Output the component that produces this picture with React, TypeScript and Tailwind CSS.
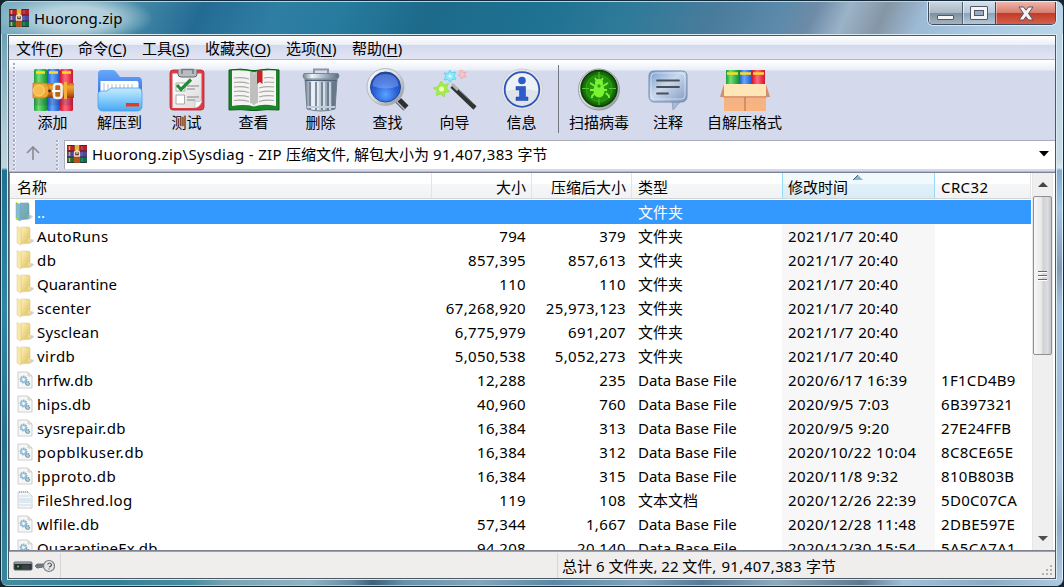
import React from "react";

type Row = [string, string, string, string, string, string, string, string];

const rows: Row[] = [
  ["folder", "AutoRuns", "tracking-[0.4px]", "794", "379", "文件夹", "2021/1/7 20:40", ""],
  ["folder", "db", "tracking-[0.5px]", "857,395", "857,613", "文件夹", "2021/1/7 20:40", ""],
  ["folder", "Quarantine", "tracking-normal", "110", "110", "文件夹", "2021/1/7 20:40", ""],
  ["folder", "scenter", "tracking-[0.3px]", "67,268,920", "25,973,123", "文件夹", "2021/1/7 20:40", ""],
  ["folder", "Sysclean", "tracking-[0.25px]", "6,775,979", "691,207", "文件夹", "2021/1/7 20:40", ""],
  ["folder", "virdb", "tracking-[0.5px]", "5,050,538", "5,052,273", "文件夹", "2021/1/7 20:40", ""],
  ["db", "hrfw.db", "tracking-[0.3px]", "12,288", "235", "Data Base File", "2020/6/17 16:39", "1F1CD4B9"],
  ["db", "hips.db", "tracking-[0.3px]", "40,960", "760", "Data Base File", "2020/9/5 7:03", "6B397321"],
  ["db", "sysrepair.db", "tracking-[0.4px]", "16,384", "313", "Data Base File", "2020/9/5 9:20", "27E24FFB"],
  ["db", "popblkuser.db", "tracking-[0.55px]", "16,384", "312", "Data Base File", "2020/10/22 10:04", "8C8CE65E"],
  ["db", "ipproto.db", "tracking-[0.5px]", "16,384", "315", "Data Base File", "2020/11/8 9:32", "810B803B"],
  ["log", "FileShred.log", "tracking-[0.32px]", "119", "108", "文本文档", "2020/12/26 22:39", "5D0C07CA"],
  ["db", "wlfile.db", "tracking-[0.3px]", "57,344", "1,667", "Data Base File", "2020/12/28 11:48", "2DBE597E"],
  ["db", "QuarantineEx.db", "tracking-[0.12px]", "94,208", "20,140", "Data Base File", "2020/12/30 15:54", "5A5CA7A1"],
];

function Defs() {
  return (
    <svg className="absolute h-0 w-0" aria-hidden="true">
      <defs>
        <linearGradient id="green" x1="0" x2="1"><stop offset="0" stopColor="#1c9c3c" /><stop offset=".35" stopColor="#6fdf72" /><stop offset="1" stopColor="#159334" /></linearGradient>
        <linearGradient id="blue" x1="0" x2="1"><stop offset="0" stopColor="#1d56c8" /><stop offset=".4" stopColor="#66a6fb" /><stop offset="1" stopColor="#1c55cc" /></linearGradient>
        <linearGradient id="red" x1="0" x2="1"><stop offset="0" stopColor="#d3142f" /><stop offset=".4" stopColor="#ff6a80" /><stop offset="1" stopColor="#cd1430" /></linearGradient>
        <linearGradient id="belt" x1="0" x2="0" y1="0" y2="1"><stop offset="0" stopColor="#c66a12" /><stop offset=".25" stopColor="#f3a62f" /><stop offset=".6" stopColor="#d87a1b" /><stop offset="1" stopColor="#8c3f08" /></linearGradient>
        <linearGradient id="steel" x1="0" x2="1"><stop offset="0" stopColor="#71808f" /><stop offset=".25" stopColor="#eef3f7" /><stop offset=".6" stopColor="#a6b4c3" /><stop offset="1" stopColor="#5d6d80" /></linearGradient>
        <linearGradient id="sky" x1="0" x2="0" y1="0" y2="1"><stop offset="0" stopColor="#c9ebff" /><stop offset=".5" stopColor="#84cdfb" /><stop offset="1" stopColor="#49a6f1" /></linearGradient>
        <linearGradient id="deep" x1="0" x2="0" y1="0" y2="1"><stop offset="0" stopColor="#67a9fa" /><stop offset="1" stopColor="#2a5fe0" /></linearGradient>
        <radialGradient id="lens" cx=".5" cy=".75" r=".75"><stop offset="0" stopColor="#5aa2ff" /><stop offset=".5" stopColor="#2b62d8" /><stop offset="1" stopColor="#173fae" /></radialGradient>
        <linearGradient id="silver" x1="0" x2="1" y1="0" y2="1"><stop offset="0" stopColor="#ffffff" /><stop offset=".5" stopColor="#d6dade" /><stop offset="1" stopColor="#858d96" /></linearGradient>
        <linearGradient id="paper" x1="0" x2="1" y1="0" y2="1"><stop offset="0" stopColor="#ffffff" /><stop offset="1" stopColor="#d9d9d9" /></linearGradient>
        <radialGradient id="scan"><stop offset="0" stopColor="#37a81e" /><stop offset=".7" stopColor="#1f8a0b" /><stop offset="1" stopColor="#0c5302" /></radialGradient>
        <linearGradient id="bubble" x1="0" x2="1" y1="0" y2="1"><stop offset="0" stopColor="#7a9ccf" /><stop offset=".45" stopColor="#c9d8ec" /><stop offset="1" stopColor="#8099c0" /></linearGradient>
        <linearGradient id="box" x1="0" x2="0" y1="0" y2="1"><stop offset="0" stopColor="#e9b189" /><stop offset="1" stopColor="#fbb47f" /></linearGradient>
        <linearGradient id="yel" x1="0" x2="1" y1="0" y2="1"><stop offset="0" stopColor="#fff3b8" /><stop offset=".5" stopColor="#ecd787" /><stop offset="1" stopColor="#dfbe55" /></linearGradient>
        <linearGradient id="teal" x1="0" x2="1" y1="0" y2="1"><stop offset="0" stopColor="#82b4d3" /><stop offset="1" stopColor="#6ba39f" /></linearGradient>
      </defs>
    </svg>
  );
}

function AddIcon() {
  return (
    <svg width="46" height="46" viewBox="0 0 46 46">
      <rect x="4" y="2" width="13" height="42" rx="1.5" fill="url(#green)" />
      <rect x="17" y="2" width="13" height="42" rx="1.5" fill="url(#blue)" />
      <rect x="30" y="2" width="13" height="42" rx="1.5" fill="url(#red)" />
      <path d="M6 5.500h9M19 5.500h9M32 5.500h9" stroke="#ffdb29" strokeWidth="2.400" />
      <path d="M4 35h39" stroke="#17305c" strokeOpacity=".16" strokeWidth="7" />
      <path d="M3 16h41v15H3z" fill="url(#belt)" />
      <path d="M3 16h11q5 1 5 7.500T14 31H3z" fill="#eda534" stroke="#c8781a" strokeWidth=".8" />
      <circle cx="9" cy="23.500" r="5.500" fill="#f6bd4c" stroke="#ffdd86" strokeWidth=".8" />
      <circle cx="19.500" cy="24" r="1.400" fill="#4e2407" />
      <rect x="24" y="17" width="7.500" height="14" rx="2.500" fill="#b96618" stroke="#eeeef0" strokeWidth="2.600" />
      <path d="M22 24h8" stroke="#fff" strokeWidth="2" />
      <path d="M35.500 15v17" stroke="#f5ae3a" strokeWidth="3" />
    </svg>
  );
}

function ExtractIcon() {
  return (
    <svg width="46" height="46" viewBox="0 0 46 46">
      <path d="M1 7q0-4 4-4h11q2 0 4 3l3 4h18q4 0 4 5v20H1z" fill="url(#deep)" />
      <path d="M3.500 14h36q2 0 2 2v10h-38z" fill="#fff" />
      <path d="M7 16v9M11 17v8M15 17v8M19 17v8M23 17v8M27 17v8M31 17v8M35 17v8" stroke="#b8bec8" strokeWidth="1" />
      <path d="M1 27q0-3 4-3h5l4-3h27q4 0 4 5v13q0 5-5 5H6q-5 0-5-5z" fill="url(#sky)" stroke="#4b9ff0" strokeWidth=".8" />
      <rect x="29" y="36" width="13" height="3.500" fill="#e33c22" />
    </svg>
  );
}

function TestIcon() {
  return (
    <svg width="46" height="46" viewBox="0 0 46 46">
      <rect x="6" y="3" width="34" height="40" rx="3" fill="#e23b42" stroke="#b8222e" strokeWidth=".8" />
      <path d="M8.500 6.500h29V35q-1 5-7 6h-22z" fill="url(#paper)" />
      <path d="M30 41q2-2 1-7 4 2 7-1-1 7-8 8z" fill="#fff" stroke="#aaa" strokeWidth=".5" />
      <path d="M14 3v4q0 3 3 3h13q3 0 3-3V3" fill="#b9bdc2" stroke="#636569" />
      <path d="M18 7V2.500h11V7" fill="none" stroke="#777" strokeWidth="1.500" />
      <path d="M12 16h9v8h-9zM12 28h8.500v9H12z" fill="#fff" stroke="#aaa" />
      <path d="m13 18 4 4.500L27 12.500" fill="none" stroke="#238a3a" strokeWidth="3.200" />
      <path d="M23 19h12M23 22h8M23 30h12M23 33h8" stroke="#a7a7a7" strokeWidth="1.300" />
    </svg>
  );
}

function ViewIcon() {
  return (
    <svg width="52" height="46" viewBox="0 0 52 46">
      <path d="M1 3q12-2 23 .5h4Q39 1 51 3v40q-12-1-23 .5h-4Q13 42 1 43z" fill="#1c8528" stroke="#0c5c18" />
      <path d="M4 3.500q14-1 22 2v34Q17 37 4 39zM48 3.500q-14-1-22 2v34q9-3 22-.5z" fill="#f4f4f2" />
      <path d="M22 4q4 1 4 4v31q-1-3-4-3zM30 4q-4 1-4 4v31q1-3 4-3z" fill="#8a8a8a" fillOpacity=".5" />
      <path d="M6 11q8-1 15 1M6 15.500q8-1 15 1M6 20q8-1 15 1M6 24.500q8-1 15 1M6 29q8-1 15 1M6 33.500q8-1 15 1M46 11q-6-1-10 0M46 15.500q-6-1-10 0M46 20q-8-1-15 1M46 24.500q-8-1-15 1M46 29q-8-1-15 1M46 33.500q-8-1-15 1" fill="none" stroke="#aaa9a8" strokeWidth="1.100" />
      <path d="M29 3.500h5.500V17l-2.700-2L29 17z" fill="#c92325" />
    </svg>
  );
}

function DeleteIcon() {
  return (
    <svg width="46" height="46" viewBox="0 0 46 46">
      <path d="M16 6V2.500h14V6" fill="none" stroke="#8796a5" strokeWidth="2" />
      <path d="M7 12h32l-2 30q-14 4-28 0z" fill="url(#steel)" stroke="#6d7e91" />
      <path d="M12 15v27M18 15v28M24 15v28M30 15v28M35 15v27" stroke="#607389" strokeWidth="1.500" />
      <path d="M14 15v27M20 15v28M26 15v28M32 15v28" stroke="#edf3f8" strokeWidth="1.300" />
      <path d="M6 6.500h34l1 2q0 3.500-3 3.500H8q-3 0-3-3.500z" fill="url(#steel)" stroke="#778799" />
      <path d="M7 13.500h32" stroke="#4f6175" strokeWidth="1.200" />
      <path d="M9 40h28" stroke="#c2ceda" strokeWidth="2" />
    </svg>
  );
}

function FindIcon() {
  return (
    <svg width="46" height="46" viewBox="0 0 46 46">
      <path d="m32 32 9 9" stroke="#2c2f33" strokeWidth="7" />
      <path d="m31 34 9 9" stroke="#babdc0" strokeWidth="1.600" />
      <path d="m30 29 4 4" stroke="#d5d8dc" strokeWidth="6" />
      <circle cx="20.500" cy="20" r="18.500" fill="url(#silver)" stroke="#a5adb6" strokeWidth=".8" />
      <circle cx="20.500" cy="20" r="15" fill="url(#lens)" stroke="#234792" />
      <path d="M7.500 19q1-12 13-12t13 12q-13 5-26 0z" fill="#a6c6ff" fillOpacity=".36" />
    </svg>
  );
}

function WizardIcon() {
  return (
    <svg width="46" height="46" viewBox="0 0 46 46">
      <path d="m20 19 23 22" stroke="#303233" strokeWidth="4.500" />
      <path d="m20 17 6 6" stroke="#b1b4b6" strokeWidth="3" />
      <path d="m26 22 16 15" stroke="#888b8e" strokeWidth="1" />
      <path d="m9.500 14 2 4 5-1.500-2 4.500 3 3.500-4.500 1-1 4.500-3.500-3-4 1.500.5-5L1 21l4.500-1z" fill="#a6ea4c" stroke="#8ee43b" strokeWidth=".8" />
      <circle cx="9.500" cy="22" r="2.500" fill="#fbffc4" />
      <path d="m18 3 1.500 3 4-1-1.500 4 2 3-4 .5-2 3-2-3-4 .5L14 9l-2-3 4 .5z" fill="#8ceafa" stroke="#4fd0ee" strokeWidth=".8" />
      <circle cx="18" cy="9" r="1.600" fill="#e8fdff" />
      <path d="m30 3 1.200 2.500 3-.5-1.700 2.500L34 10l-3-.3-1.500 2.300-1-2.800-2.500-.7 2-2-.5-2.500z" fill="#f6c6cc" stroke="#f0a0a6" strokeWidth=".8" />
    </svg>
  );
}

function InfoIcon() {
  return (
    <svg width="46" height="46" viewBox="0 0 46 46">
      <circle cx="23" cy="22.500" r="20.500" fill="#e1e5e8" stroke="#cdd2d8" />
      <circle cx="23" cy="22.500" r="17.300" fill="#dfe4ea" stroke="#2f55bb" strokeWidth="1.800" />
      <path d="M7 24Q8 7 23 6.500T39 24q-16-4-32 0z" fill="#fff" fillOpacity=".5" />
      <circle cx="23" cy="13.500" r="3.800" fill="#2f5ccb" />
      <path d="M17 19.500h9.500V30H29v3.500H17V30h3.500v-7H17z" fill="#2d5bcd" stroke="#1c3f9b" strokeWidth=".5" />
    </svg>
  );
}

function ScanIcon() {
  return (
    <svg width="46" height="46" viewBox="0 0 46 46">
      <circle cx="23" cy="22.500" r="20.500" fill="url(#silver)" stroke="#878e8d" strokeWidth=".8" />
      <circle cx="23" cy="21.500" r="18" fill="url(#scan)" stroke="#123e0d" strokeWidth="1.500" />
      <path d="M23 5v7M23 32v6M6 21.500h7M33 21.500h7" stroke="#56c833" strokeWidth="1" />
      <circle cx="23" cy="21.500" r="13" fill="none" stroke="#3faa20" strokeWidth=".7" />
      <ellipse cx="23" cy="23.500" rx="5.500" ry="7" fill="#7af332" />
      <circle cx="23" cy="16" r="4" fill="#7af332" />
      <path d="m19 11 2 3m6-3-2 3m-6 5-5-3m18 0-5 3m-8 4h-5m17 0h-6m-6 3-3 3v2m14-5 3 3v2" fill="none" stroke="#7af332" strokeWidth="1.800" />
      <circle cx="23" cy="19" r="1.700" fill="#3f9f22" />
    </svg>
  );
}

function CommentIcon() {
  return (
    <svg width="46" height="46" viewBox="0 0 46 46">
      <path d="M27 34h9l-8 9z" fill="#a9b9d3" stroke="#8d9bb3" strokeWidth=".8" />
      <path d="M9 4h28q5 0 5 5v20q0 6-6 6H10q-6 0-6-6V9q0-5 5-5z" fill="url(#bubble)" stroke="#7089b1" />
      <path d="M10 6h26q4 0 4 4v18q0 4-4 4H10q-4 0-4-4V10q0-4 4-4z" fill="none" stroke="#eef5ff" strokeOpacity=".6" />
      <path d="M12 13.500h22M12 20h22M12 26.500h11" stroke="#4b4f58" strokeWidth="1.800" strokeLinecap="round" />
    </svg>
  );
}

function SfxIcon() {
  return (
    <svg width="52" height="46" viewBox="0 0 52 46">
      <path d="M7 3h13v17H7z" fill="url(#green)" />
      <path d="M20 3h13v17H20z" fill="url(#blue)" />
      <path d="M33 3h13v17H33z" fill="url(#red)" />
      <path d="M8 6.500h11M21 6.500h11M34 6.500h11" stroke="#ffdb29" strokeWidth="2.400" />
      <path d="M5 18h42v26H5z" fill="url(#box)" />
      <path d="M5 17h42l3 12H2z" fill="#ffe6b7" />
      <path d="M2 29h48l-3 2H5z" fill="#c98560" fillOpacity=".5" />
      <path d="M5 17 1 30h4zM47 17l4 13h-4z" fill="#cf8f6b" />
      <path d="M26 30v14" stroke="#b96a43" strokeWidth="1" />
    </svg>
  );
}

function ArchiveLogo() {
  return (
    <svg width="22" height="20" viewBox="0 0 22 20" className="shrink-0">
      <rect x="1" y="1" width="20" height="6" fill="#b3202f" />
      <rect x="1" y="7" width="20" height="6" fill="#4a47a0" />
      <rect x="1" y="13" width="20" height="6" fill="#0a7440" />
      <path d="M1 1.500h20M1 18.500h20M1 7h20M1 13h20" stroke="#3a1830" strokeOpacity=".7" />
      <path d="M3.500 2v4M3.500 8v4M3.500 14v4" stroke="#f0a432" strokeWidth="1.600" />
      <path d="M16 2v4M16 8v4M16 14v4" stroke="#8990b7" strokeOpacity=".6" />
      <path d="M8 1h6v18H8z" fill="#a1521a" />
      <path d="M9 1h4v5l-2 2-2-2z" fill="#eeb040" />
      <path d="M8.500 12V9q0-2 2.500-2t2.500 2v3z" fill="#5e3a22" stroke="#eadfca" strokeWidth="1.400" />
      <path d="M11 5.500V10" stroke="#f6e7c0" strokeWidth="1.300" />
      <path d="M8 14h6v4H8z" fill="#b8501f" />
    </svg>
  );
}

function FileIcon({ kind }: { kind: string }) {
  if (kind === "folder" || kind === "up") {
    const up = kind === "up";
    return (
      <svg width="18" height="22" viewBox="0 0 18 22">
        <path d="M10 18l5-4 3 1q-1 3-6 4z" fill="#c3c5c8" fillOpacity=".8" />
        <path d="M5 2h8l1 1v14l-2 1-7 1z" fill={up ? "url(#teal)" : "url(#yel)"} stroke={up ? "#6a9faa" : "#d9c27c"} strokeWidth=".5" />
        <path d="m1 1.500 4 2V20l-4-2z" fill={up ? "#86bcd0" : "#f7e7a9"} stroke={up ? "#6fa8b6" : "#e0cc8a"} strokeWidth=".5" />
        <path d="M12.500 13l2 1v3l-3 1z" fill={up ? "#83aeb4" : "#f2dc88"} />
        {up && <path d="M1 1h1v1H1zM12 1h1v1h-1zM14 12h1v1h-1zM1 17h1v1H1z" fill="#c8e81a" />}
      </svg>
    );
  }
  return (
    <svg width="18" height="22" viewBox="0 0 18 22">
      <path d="M2 3h10l4 4v12H2z" fill={kind === "log" ? "#f5f8fa" : "#f7f7f7"} stroke="#c4c4c4" strokeWidth=".8" />
      {kind === "log" ? (
        <>
          <path d="M3 7h11M3 13h12M3 16h12" stroke="#cbdae6" />
          <path d="M3 9h12v3H3z" fill="#dce8f0" />
          <path d="M3 3h9" stroke="#a5a5a5" strokeWidth="1.500" strokeDasharray="1 1" />
        </>
      ) : (
        <>
          <path d="M12 3v4h4" fill="#e2e2e2" stroke="#c4c4c4" strokeWidth=".7" />
          <circle cx="7.500" cy="10.500" r="3" fill="#d8ebf5" stroke="#84aeca" strokeWidth="1.800" strokeDasharray="1.600 .6" />
          <circle cx="7.500" cy="10.500" r="2" fill="#e8f5fb" stroke="#8fb6cc" strokeWidth=".8" />
          <circle cx="11.500" cy="14.500" r="1.900" fill="#b8d2e1" stroke="#6f92ab" strokeWidth="1.300" strokeDasharray="1.200 .5" />
        </>
      )}
    </svg>
  );
}

function Grip({ className }: { className: string }) {
  return (
    <div className={"w-[3px] shrink-0 bg-[radial-gradient(circle_at_1px_1px,#a4a9bb_0px,#a9aec0_0.8px,#ffffff_1.4px,transparent_2px)] bg-[length:3px_4px] " + className} />
  );
}

function Tool({ icon, label, className }: { icon: React.ReactNode; label: string; className: string }) {
  return (
    <div className={"flex shrink-0 flex-col items-center " + className}>
      <div className="flex h-[46px] items-center">{icon}</div>
      <div className="mt-[-1px] h-5 leading-5 whitespace-nowrap">{label}</div>
    </div>
  );
}

const menus: [string, string, string][] = [
  ["文件", "F", "w-[62px]"],
  ["命令", "C", "w-16"],
  ["工具", "S", "w-[63px]"],
  ["收藏夹", "O", "w-[81px]"],
  ["选项", "N", "w-[66px]"],
  ["帮助", "H", "w-20"],
];

export default function App() {
  return (
    <div className="h-[587px] w-[1064px] overflow-hidden bg-[#17222c] font-['Noto_Sans','Noto_Sans_CJK_SC',sans-serif] text-[15px] leading-5 text-black">
      <Defs />
      <div className="flex h-full flex-col overflow-hidden rounded-[8px] border border-[#142b39] bg-[#7fa4bc]">
        <div className="flex h-[33px] shrink-0 items-start rounded-t-[7px] border-t border-[#b6d3df] bg-[linear-gradient(115deg,#7fb0c3_0%,#6ba3b9_8%,#3d83a3_14%,#246b94_19%,#2f7ea3_26%,#277b9d_32%,#1d6a8b_40%,#1f7292_51%,#2f7a99_59%,#4a7c9c_67%,#5c8aaa_73%,#6d8ba7_76%,#9bb3c8_79%,#8496a6_82.500%,#9db9d3_86%,#a6c7e2_91%,#bcd6e9_100%)]">
          <div className="flex h-8 w-[150px] items-center bg-[radial-gradient(ellipse_52%_75%_at_50%_50%,rgba(200,222,230,0.8)_45%,rgba(200,222,230,0)_100%)] pl-[7px]">
            <ArchiveLogo />
            <span className="ml-1 tracking-[0.15px]">Huorong.zip</span>
          </div>
          <div className="mr-[7px] ml-auto flex h-[23px] overflow-hidden rounded-b-[5px] border border-t-0 border-[#424c59] shadow-[0_0_0_1px_rgba(240,248,255,0.7)]">
            <div className="flex w-[34px] justify-center border-r border-[#53606e] bg-[linear-gradient(180deg,#cad6e0_0%,#a9b8c5_48%,#7e8e9d_50%,#a3b3c2_100%)] pt-[13px] shadow-[inset_1px_0_0_rgba(255,255,255,0.5)]">
              <div className="h-[5px] w-[17px] rounded-[1px] border border-[#535666] bg-[#f5f5f5]" />
            </div>
            <div className="flex w-[33px] justify-center border-r border-[#7c3327] bg-[linear-gradient(180deg,#d3dfeb_0%,#b6c8d9_48%,#8ca0b3_50%,#b3c8da_100%)] pt-1 shadow-[inset_1px_0_0_rgba(255,255,255,0.5)]">
              <div className="flex h-[14px] w-[18px] items-center justify-center rounded-[1px] border border-[#535666] bg-[#f5f5f5]">
                <div className="h-[6px] w-[10px] border border-[#535666] bg-[#98adc3]" />
              </div>
            </div>
            <div className="flex w-[59px] justify-center bg-[linear-gradient(180deg,#ecb5aa_0%,#d97d6e_48%,#c03a24_50%,#d6604a_100%)] pt-[4px] shadow-[inset_1px_0_0_rgba(255,255,255,0.4)]">
              <svg width="16" height="15" viewBox="0 0 16 15">
                <path d="M1 1h4.500L8 4.300 10.500 1H15l-4.500 6.500L15 14h-4.500L8 10.700 5.500 14H1l4.500-6.500z" fill="#f4f4f4" stroke="#535666" />
              </svg>
            </div>
          </div>
        </div>

        <div className="flex h-[546px] shrink-0">
          <div className="w-[6px] shrink-0 border-l border-[#b9d8e2] bg-[linear-gradient(180deg,#6ca2b5_0%,#b0cbd5_18%,#bfd5dc_24.500%,#1f7293_25%,#2d87a5_50%,#26718f_75%,#35869c_100%)]" />
          <div className="flex w-[1050px] shrink-0 flex-col border border-[#dcebf2]">
            <div className="flex h-[544px] flex-col border border-[#4b5763] bg-[#d4daec]">
              <nav className="flex h-[24px] shrink-0 items-center border-b border-[#b3b8c8] bg-[linear-gradient(180deg,#ffffff_0%,#e9eef7_39%,#d3d9ed_40%,#e1e5f5_100%)] pl-[7px]">
                {menus.map(([t, k, w]) => (
                  <div key={k} className={"shrink-0 whitespace-nowrap " + w}>
                    {t}(<span className="underline underline-offset-2">{k}</span>)
                  </div>
                ))}
              </nav>

              <div className="flex h-[80px] shrink-0 border-t border-white bg-[linear-gradient(180deg,#ffffff_0px,#e8eef7_9px,#d4daec_10px)]">
                <Grip className="mt-[2px] ml-[4px] h-[78px]" />
                <div className="ml-[3px] flex pt-[6px]">
                  <Tool icon={<AddIcon />} label="添加" className="w-[67px]" />
                  <Tool icon={<ExtractIcon />} label="解压到" className="w-[67px]" />
                  <Tool icon={<TestIcon />} label="测试" className="w-[67px]" />
                  <Tool icon={<ViewIcon />} label="查看" className="w-[67px]" />
                  <Tool icon={<DeleteIcon />} label="删除" className="w-[67px]" />
                  <Tool icon={<FindIcon />} label="查找" className="w-[67px]" />
                  <Tool icon={<WizardIcon />} label="向导" className="w-[67px]" />
                  <Tool icon={<InfoIcon />} label="信息" className="w-[67px]" />
                  <div className="-mt-[2px] ml-[3px] h-[68px] w-px bg-[#737780]" />
                  <Tool icon={<ScanIcon />} label="扫描病毒" className="w-[80px]" />
                  <Tool icon={<CommentIcon />} label="注释" className="w-[58px]" />
                  <Tool icon={<SfxIcon />} label="自解压格式" className="w-[95px]" />
                </div>
              </div>

              <div className="flex h-[32px] shrink-0 border-b border-[#b3b9cb]">
                <Grip className="ml-[4px] h-[31px]" />
                <div className="flex w-[40px] items-start justify-center pt-[5px] pr-[6px]">
                  <svg width="16" height="16" viewBox="0 0 16 16"><path d="M8 15V2M2 8l6-6 6 6" fill="none" stroke="#8b8b8f" strokeWidth="1.600" /></svg>
                </div>
                <Grip className="h-[31px]" />
                <div className="ml-[5px] flex h-[29px] flex-1 items-center border-t border-l border-[#a9adba] bg-white pr-[6px] pb-[2px] pl-[1px]">
                  <ArchiveLogo />
                  <span className="ml-[4px] whitespace-nowrap"><span className="tracking-[0.32px]">Huorong.zip\Sysdiag - ZIP </span>压缩文件, 解包大小为 <span className="tracking-[0.4px]">91,407,383</span> 字节</span>
                  <svg width="10" height="6" viewBox="0 0 10 6" className="ml-auto"><path d="M0 0h10L5 5.500z" fill="#000" /></svg>
                </div>
              </div>

              <div className="flex h-[379px] shrink-0 overflow-hidden border-t border-b border-l border-[#7d8390] bg-white">
                <div className="flex w-[1021px] shrink-0 flex-col">
                  <div className="flex h-[26px] shrink-0 items-center border-b border-[#d5d5d5] bg-[linear-gradient(180deg,#ffffff_0%,#ffffff_42%,#f6f7f8_43%,#f1f2f4_100%)]">
                    <div className="flex h-full w-[422px] shrink-0 items-center border-r border-[#e3e4e6] pt-[2px] pl-[7px]">名称</div>
                    <div className="flex h-full w-[100px] shrink-0 items-center justify-end border-r border-[#e3e4e6] pt-[2px] pr-[5px]">大小</div>
                    <div className="flex h-full w-[100px] shrink-0 items-center justify-end border-r border-[#e3e4e6] pt-[2px] pr-[5px]">压缩后大小</div>
                    <div className="flex h-full w-[150px] shrink-0 items-center pt-[2px] pl-[6px]">类型</div>
                    <div className="relative flex h-full w-[153px] shrink-0 items-center border-x border-[#96d9f9] bg-[linear-gradient(180deg,#f2f9fc_0%,#f2f9fc_42%,#e1f1f9_43%,#d8ecf6_100%)] pt-[2px] pl-[5px]">
                      修改时间
                      <svg width="10" height="5" viewBox="0 0 10 5" className="absolute top-[2px] left-[70px]"><path d="M0 5 5 0l5 5z" fill="#85b5cc" /><path d="M0 5 5 0" stroke="#3c6780" /></svg>
                    </div>
                    <div className="flex h-full flex-1 items-center border-r border-[#e3e4e6] pt-[2px] pl-[6px] tracking-[0.4px]">CRC32</div>
                  </div>
                  <div className="h-px shrink-0" />
                  <div className="flex h-6 shrink-0 items-center">
                    <div className="flex w-[25px] shrink-0 justify-center pl-[3px]"><FileIcon kind="up" /></div>
                    <div className="flex h-6 flex-1 items-center bg-[#3399ff] text-white">
                      <div className="w-[603px] pl-[2px]">..</div>
                      <div>文件夹</div>
                    </div>
                  </div>
                  {rows.map(([kind, name, fit, size, packed, type, date, crc]) => (
                    <div key={name} className="flex h-6 shrink-0 items-center whitespace-nowrap">
                      <div className="flex w-[25px] shrink-0 justify-center pl-[4px]"><FileIcon kind={kind} /></div>
                      <div className={"w-[391px] shrink-0 pl-[2px] " + fit}>{name}</div>
                      <div className="w-[100px] shrink-0 text-right tracking-[0.35px]">{size}</div>
                      <div className="w-[100px] shrink-0 text-right tracking-[0.35px]">{packed}</div>
                      <div className="w-[156px] shrink-0 pl-[12px]">{type}</div>
                      <div className="flex h-6 w-[153px] shrink-0 items-center bg-[#f7f7f7] pl-[6px] tracking-[0.4px]">{date}</div>
                      <div className="pl-[6px] tracking-[0.3px]">{crc}</div>
                    </div>
                  ))}
                </div>
                <div className="ml-[1px] flex w-[21px] shrink-0 flex-col border-x border-[#e7e7e7] bg-[#efefef]">
                  <div className="flex h-[23px] shrink-0 items-center justify-center">
                    <svg width="10" height="5" viewBox="0 0 10 5"><path d="m0 5 5-5 5 5z" fill="#454545" /></svg>
                  </div>
                  <div className="flex h-[159px] shrink-0 items-center justify-center rounded-[2px] border border-[#8f8f94] bg-[linear-gradient(90deg,#f8f8f8_0%,#e8e8e9_45%,#d0d1d4_52%,#dcdde0_80%,#c3c4c8_100%)]">
                    <svg width="9" height="11" viewBox="0 0 9 11"><path d="M0 1.500h9M0 5.500h9M0 9.500h9" stroke="#666b70" /><path d="M0 2.500h9M0 6.500h9M0 10.500h9" stroke="#fff" /></svg>
                  </div>
                  <div className="mt-auto flex h-[24px] items-center justify-center">
                    <svg width="10" height="5" viewBox="0 0 10 5"><path d="m0 0 5 5 5-5z" fill="#4d4d4d" /></svg>
                  </div>
                </div>
              </div>

              <footer className="flex h-[27px] shrink-0 border-t border-[#9ba0aa] bg-[#f0eded] pt-px">
                <div className="flex w-[52px] items-center gap-[2px] border-r border-[#d7d5d5] pl-[4px]">
                  <svg width="20" height="12" viewBox="0 0 20 12" className="shrink-0"><rect x="1" y="2" width="18" height="8" rx="1" fill="#293034" stroke="#5b6268" /><path d="M2 2h16l1 2H1z" fill="#8a9299" /><circle cx="5" cy="6.500" r="1" fill="#63db3f" /><path d="M10 5v4M12 5v4M14 5v4M16 5v4" stroke="#555e65" strokeWidth=".8" /></svg>
                  <svg width="20" height="14" viewBox="0 0 20 14" className="shrink-0"><path d="M10 5H2L0 7l2 2h2l1-1 1 1 1-1h4z" fill="#737a80" stroke="#52595f" strokeWidth=".7" /><circle cx="14" cy="7" r="5.500" fill="#e3e6e8" stroke="#777d81" strokeWidth="1.200" /><path d="M12.500 5.500q2-3 4 0 0 2-2.500 2.500M14 9.500v1" fill="none" stroke="#545b60" strokeWidth="1.200" /></svg>
                </div>
                <div className="w-[497px] border-r border-[#d7d5d5]" />
                <div className="flex items-center pl-[4px] whitespace-nowrap">总计 6 文件夹, 22 文件, <span className="ml-[5px] tracking-[0.4px]">91,407,383</span><span className="ml-1">字节</span></div>
                <svg width="12" height="12" viewBox="0 0 12 12" className="mt-auto mr-[2px] mb-[2px] ml-auto"><path d="M9 1h2v2H9zM5 5h2v2H5zM9 5h2v2H9zM1 9h2v2H1zM5 9h2v2H5zM9 9h2v2H9z" fill="#b3b1b1" /></svg>
              </footer>
            </div>
          </div>
          <div className="w-[6px] shrink-0 border-r border-[#e3f1fa] bg-[linear-gradient(180deg,#bad4e7_0%,#c8dae8_23%,#dce7ef_24.500%,#83abd0_25%,#a6c8e5_32%,#829cb5_43%,#a4c5df_50%,#a0bfdc_68%,#b0cce4_80%,#8dacc9_90%,#aecae2_100%)]" />
        </div>
        <div className="flex-1 rounded-b-[7px] border-b border-[#a8cbd6] bg-[linear-gradient(90deg,#438da0_0%,#317f95_10%,#478ea1_18%,#76a2b0_21%,#90b4c2_29%,#668da4_33%,#3d6178_35%,#6791ab_38%,#82a6bb_45%,#5a88a4_52%,#7fa4bc_60%,#577a98_66%,#8faabb_73%,#60798d_81%,#a0bfd8_85%,#8caac3_93%,#aecae2_100%)]" />
      </div>
    </div>
  );
}
